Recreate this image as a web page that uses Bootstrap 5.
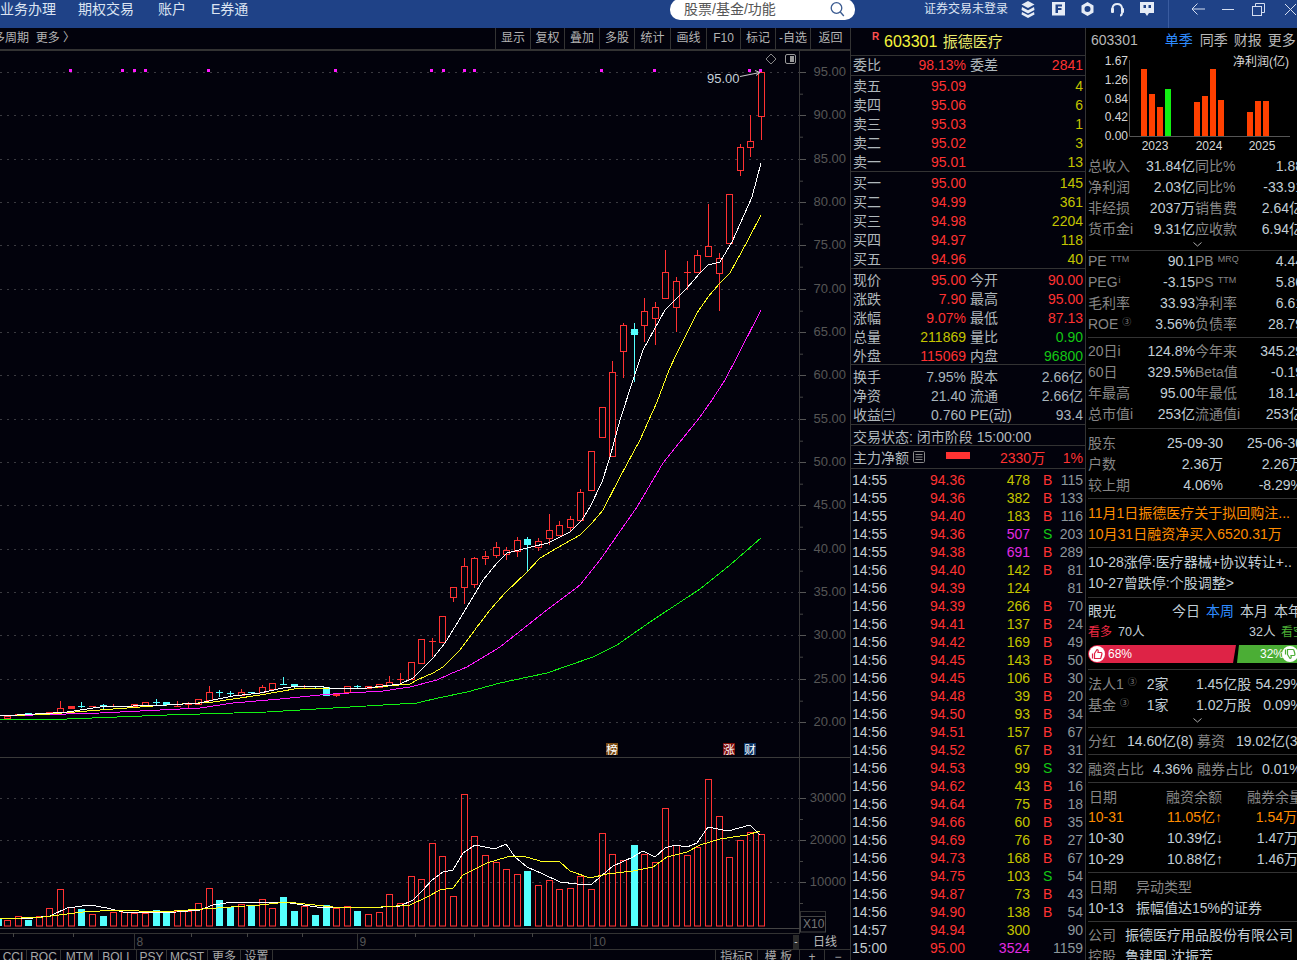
<!DOCTYPE html>
<html lang="zh"><head><meta charset="utf-8"><title>603301 振德医疗</title>
<link href="https://cdn.jsdelivr.net/npm/bootstrap@5.3.0/dist/css/bootstrap.min.css" rel="stylesheet">
<style>
html,body{margin:0;width:1297px;height:960px;overflow:hidden;background:#02020c;font-family:"Liberation Sans","Noto Sans CJK SC",sans-serif;font-size:14px;color:#b8c4cc}
svg{display:block}
svg text{font-family:"Liberation Sans","Noto Sans CJK SC",sans-serif}
.topbar{height:28px;background:#1f4287;color:#dce4f2;flex:none}
.topnav{line-height:19px;white-space:nowrap}
.searchbox{position:absolute;left:670px;top:-1px;width:185px;height:21px;background:#fff;border-radius:10px;color:#555;line-height:20px;padding-left:14px}
.mainarea{height:932px}
.chartcol{width:851px;border-right:1px solid #333;flex:none;overflow:hidden}
.toolbar{height:23px;border-bottom:2px solid #333;background:#02020c;font-size:12px;color:#b4b4b4;line-height:21px;white-space:nowrap}
.tbtn{border-left:1px solid #333;text-align:center;flex:none;height:21px}
.toolleft{overflow:hidden;margin-left:-8px;width:503px;flex:none;padding-left:1px}
.botbar{height:10px;font-size:12px;color:#a8a8a8;line-height:15px;overflow:hidden;white-space:nowrap}
.botcell{border-right:1px solid #333;text-align:center;flex:none;height:10px}
.quote{width:235px;border-right:1px solid #333;flex:none;overflow:hidden;background:#02020c}
.qsec{border-bottom:1px solid #333}
.qtitle{height:28px;position:relative;line-height:27px;color:#f5f53c;padding-left:33px;font-size:16px}
.qtitle b{position:absolute;left:21px;top:3px;font-size:10px;line-height:12px;color:#ff5050;font-weight:700}
.qtitle i{font-style:normal;font-size:15px;margin-left:1px;color:#e9e96a}
.qrow{height:19px;line-height:19px;padding:0 2px;display:flex;white-space:nowrap}
.lh1 .qrow{line-height:21px}
.lh2 .qrow{line-height:23px}
.qlb{width:30px;flex:none;color:#b0b8bc}
.qv{width:83px;flex:none;text-align:right;color:#ff3232}
.qlb2{margin-left:4px;flex:none;color:#b0b8bc}
.qe{margin-left:auto;text-align:right;color:#c4c400}
.tick{height:18px;line-height:22px;display:flex;padding:0 2px 0 1px;white-space:nowrap}
.tt{width:40px;flex:none;color:#c4ccd0}
.tp{width:73px;text-align:right;flex:none;color:#ff3232}
.tv{width:65px;text-align:right;flex:none;color:#c4c400}
.tf{width:8px;margin-left:13px;flex:none;color:#ff3232;text-align:center}
.tl{margin-left:auto;color:#8d979c}
.fin{width:211px;background:#000;overflow:hidden;flex:none}
.fhead{height:22px;line-height:24px;white-space:nowrap;padding-left:5px;color:#b8b8b8}
.fhead span{margin-left:6px}
.fsec{width:215px;margin-left:2px;border-bottom:1px solid #333;white-space:nowrap}
.fr{height:21px;line-height:21px;display:flex;position:relative}
.fa{width:107px;flex:none;display:flex;justify-content:space-between}
.fb{width:108px;flex:none;display:flex;justify-content:space-between}
.gl{color:#868686}
.vl{color:#c2ced6}
sup.tiny{font-size:9px;top:-.4em;color:#868686;margin-left:4px;line-height:0}
.chev{height:11px;width:218px;padding-top:2px}
.chev svg{margin:0 auto}
.news{color:#ff8c00}
.blu{color:#2f8cff}
.vote{height:18px;position:relative;margin-top:2px;font-size:12px;line-height:18px;color:#fff}
.vred{position:absolute;left:0;top:0;width:148px;height:18px;background:#de2346;clip-path:polygon(0 0,100% 0,98% 100%,0 100%);border-radius:9px 0 0 9px;padding-left:20px}
.vgrn{position:absolute;left:149px;top:0;width:66px;height:18px;background:#4bae35;clip-path:polygon(3% 0,100% 0,100% 100%,0 100%);padding-left:23px}
.vico{position:absolute;top:1px;width:16px;height:16px;border-radius:50%;background:#fff}
.cr{color:#ff3232}.cg{color:#14c814}.cy{color:#c4c400}.cw{color:#a9b6bd}.cm{color:#e22be2}
</style></head>
<body class="d-flex flex-column">
<header class="topbar d-flex position-relative">
 <div class="topnav d-flex"><span>业务办理</span><span style="margin-left:22px">期权交易</span><span style="margin-left:24px">账户</span><span style="margin-left:25px">E券通</span></div>
 <div class="searchbox">股票/基金/功能
  <svg class="position-absolute" style="right:9px;top:2px" width="17" height="17" viewBox="0 0 17 17" fill="none" stroke="#3a5a90" stroke-width="1.3"><circle cx="7.5" cy="7" r="5.3"/><path d="M11.3 11l3.5 4"/></svg>
 </div>
 <span class="position-absolute topnav" style="left:924px;top:0;font-size:12px">证券交易未登录</span>
 <svg class="position-absolute" style="left:1020px;top:0" width="277" height="28" viewBox="1020 0 277 28">
  <g fill="#e6ecf6"><path d="M1028 1l6.5 3.5-6.5 3.5-6.500-3.500z"/><path d="M1022 7l6 3.300 6-3.300 .5 3-6.500 3.500-6.500-3.500z"/><path d="M1022 12l6 3 6-3 .5 2.500-6.500 3.500-6.500-3.500z"/>
  <path fill-rule="evenodd" d="M1052 2h13v13.500h-13zM1055.500 4.500v8.500h2.500v-3h3.500v-2h-3.500v-1.500h4v-2z"/>
  <path fill-rule="evenodd" d="M1087.500 2l6 3.500v7l-6 3.500-6-3.500v-7zM1087.500 6a3 3 0 100 6 3 3 0 000-6z"/>
  <path fill-rule="evenodd" d="M1140 2h14v11h-5l-2 3-2-3h-5zM1143.500 5v3h2.500v-3zM1148.500 5v3h2.500v-3z"/></g>
  <path d="M1112.500 12V8a4.800 4.800 0 019.500 0v4M1120 15.500c1.500 0 2-1 2-3" fill="none" stroke="#e6ecf6" stroke-width="2"/>
  <rect x="1111" y="8" width="3" height="5" rx="1" fill="#e6ecf6"/><rect x="1121" y="8" width="3" height="5" rx="1" fill="#e6ecf6"/>
  <path d="M1168.500 0v28" stroke="#3a5ca0"/>
  <g fill="none" stroke="#d5def0" stroke-width="1"><path d="M1192 9h13M1197.500 3.500l-5.500 5.500 5.500 5.500"/><path d="M1222 9.500h12"/><rect x="1252.500" y="6.500" width="9" height="9"/><path d="M1255.500 6.500v-3h9v9h-3"/><path d="M1285 4l11 11M1296 4l-11 11"/></g>
 </svg>
</header>
<div class="d-flex mainarea">
 <section class="chartcol d-flex flex-column">
  <div class="toolbar d-flex">
   <div class="toolleft">多周期&nbsp;&nbsp;更多 〉</div>
   <div class="tbtn" style="width:35px">显示</div><div class="tbtn" style="width:34px">复权</div><div class="tbtn" style="width:35px">叠加</div><div class="tbtn" style="width:35px">多股</div><div class="tbtn" style="width:36px">统计</div><div class="tbtn" style="width:36px">画线</div><div class="tbtn" style="width:34px">F10</div><div class="tbtn" style="width:35px">标记</div><div class="tbtn" style="width:35px">-自选</div><div class="tbtn" style="width:40px">返回</div>
  </div>
  <svg id="kchart" width="850" height="899" viewBox="0 51 850 899"></svg>
  <div class="botbar d-flex">
   <div class="botcell" style="width:27px">CCI</div><div class="botcell" style="width:34px">ROC</div><div class="botcell" style="width:38px">MTM</div><div class="botcell" style="width:38px">BOLL</div><div class="botcell" style="width:30px">PSY</div><div class="botcell" style="width:41px">MCST</div><div class="botcell" style="width:33px">更多</div><div class="botcell" style="width:32px">设置</div>
   <div style="width:443px;flex:none" class="botcell"></div><div class="botcell" style="width:42px">指标R</div><div class="botcell" style="width:42px">模 板</div><div class="botcell" style="width:25px">+</div><div class="botcell" style="width:26px;border:0">−</div>
  </div>
 </section>

 <section class="quote">
  <div class="qsec qtitle"><b>R</b>603301 <i>振德医疗</i></div>
  <div class="qsec" style="height:20px"><div class="qrow"><span class="qlb">委比</span><span class="qv">98.13%</span><span class="qlb2">委差</span><span class="qe cr">2841</span></div></div>
  <div class="qsec lh1">
   <div class="qrow"><span class="qlb">卖五</span><span class="qv">95.09</span><span class="qe">4</span></div>
   <div class="qrow"><span class="qlb">卖四</span><span class="qv">95.06</span><span class="qe">6</span></div>
   <div class="qrow"><span class="qlb">卖三</span><span class="qv">95.03</span><span class="qe">1</span></div>
   <div class="qrow"><span class="qlb">卖二</span><span class="qv">95.02</span><span class="qe">3</span></div>
   <div class="qrow"><span class="qlb">卖一</span><span class="qv">95.01</span><span class="qe">13</span></div>
  </div>
  <div class="qsec lh2" style="padding-bottom:1px">
   <div class="qrow"><span class="qlb">买一</span><span class="qv">95.00</span><span class="qe">145</span></div>
   <div class="qrow"><span class="qlb">买二</span><span class="qv">94.99</span><span class="qe">361</span></div>
   <div class="qrow"><span class="qlb">买三</span><span class="qv">94.98</span><span class="qe">2204</span></div>
   <div class="qrow"><span class="qlb">买四</span><span class="qv">94.97</span><span class="qe">118</span></div>
   <div class="qrow"><span class="qlb">买五</span><span class="qv">94.96</span><span class="qe">40</span></div>
  </div>
  <div class="qsec lh2">
   <div class="qrow"><span class="qlb">现价</span><span class="qv">95.00</span><span class="qlb2">今开</span><span class="qe cr">90.00</span></div>
   <div class="qrow"><span class="qlb">涨跌</span><span class="qv">7.90</span><span class="qlb2">最高</span><span class="qe cr">95.00</span></div>
   <div class="qrow"><span class="qlb">涨幅</span><span class="qv">9.07%</span><span class="qlb2">最低</span><span class="qe cr">87.13</span></div>
   <div class="qrow"><span class="qlb">总量</span><span class="qv cy">211869</span><span class="qlb2">量比</span><span class="qe cg">0.90</span></div>
   <div class="qrow"><span class="qlb">外盘</span><span class="qv">115069</span><span class="qlb2">内盘</span><span class="qe cg">96800</span></div>
  </div>
  <div class="qsec lh2" style="height:60px;padding-top:1px">
   <div class="qrow"><span class="qlb">换手</span><span class="qv cw">7.95%</span><span class="qlb2">股本</span><span class="qe cw">2.66亿</span></div>
   <div class="qrow"><span class="qlb">净资</span><span class="qv cw">21.40</span><span class="qlb2">流通</span><span class="qe cw">2.66亿</span></div>
   <div class="qrow"><span class="qlb text-nowrap">收益㈢</span><span class="qv cw">0.760</span><span class="qlb2">PE(动)</span><span class="qe cw">93.4</span></div>
  </div>
  <div class="qsec" style="height:21px;line-height:24px;padding-left:2px;color:#b0b8bc">交易状态: 闭市阶段 15:00:00</div>
  <div class="qsec" style="height:23px">
   <div class="qrow position-relative" style="line-height:24px;height:22px"><span class="qlb text-nowrap">主力净额</span>
    <svg class="position-absolute" style="left:62px;top:5px" width="12" height="12" fill="none" stroke="#888"><rect x=".5" y=".5" width="11" height="11" rx="1"/><path d="M2.500 3.500h7M2.500 6h7M2.500 8.500h7"/></svg>
    <span class="position-absolute" style="left:95px;top:6px;width:24px;height:7px;background:#ff3232"></span>
    <span class="position-absolute cr" style="left:149px">2330万</span><span class="qe cr">1%</span></div>
  </div>
  <div id="ticks">
<div class="tick"><span class="tt">14:55</span><span class="tp">94.36</span><span class="tv">478</span><span class="tf">B</span><span class="tl">115</span></div>
<div class="tick"><span class="tt">14:55</span><span class="tp">94.36</span><span class="tv">382</span><span class="tf">B</span><span class="tl">133</span></div>
<div class="tick"><span class="tt">14:55</span><span class="tp">94.40</span><span class="tv">183</span><span class="tf">B</span><span class="tl">116</span></div>
<div class="tick"><span class="tt">14:55</span><span class="tp">94.36</span><span class="tv cm">507</span><span class="tf cg">S</span><span class="tl">203</span></div>
<div class="tick"><span class="tt">14:55</span><span class="tp">94.38</span><span class="tv cm">691</span><span class="tf">B</span><span class="tl">289</span></div>
<div class="tick"><span class="tt">14:56</span><span class="tp">94.40</span><span class="tv">142</span><span class="tf">B</span><span class="tl">81</span></div>
<div class="tick"><span class="tt">14:56</span><span class="tp">94.39</span><span class="tv">124</span><span class="tf"></span><span class="tl">81</span></div>
<div class="tick"><span class="tt">14:56</span><span class="tp">94.39</span><span class="tv">266</span><span class="tf">B</span><span class="tl">70</span></div>
<div class="tick"><span class="tt">14:56</span><span class="tp">94.41</span><span class="tv">137</span><span class="tf">B</span><span class="tl">24</span></div>
<div class="tick"><span class="tt">14:56</span><span class="tp">94.42</span><span class="tv">169</span><span class="tf">B</span><span class="tl">49</span></div>
<div class="tick"><span class="tt">14:56</span><span class="tp">94.45</span><span class="tv">143</span><span class="tf">B</span><span class="tl">50</span></div>
<div class="tick"><span class="tt">14:56</span><span class="tp">94.45</span><span class="tv">106</span><span class="tf">B</span><span class="tl">30</span></div>
<div class="tick"><span class="tt">14:56</span><span class="tp">94.48</span><span class="tv">39</span><span class="tf">B</span><span class="tl">20</span></div>
<div class="tick"><span class="tt">14:56</span><span class="tp">94.50</span><span class="tv">93</span><span class="tf">B</span><span class="tl">34</span></div>
<div class="tick"><span class="tt">14:56</span><span class="tp">94.51</span><span class="tv">157</span><span class="tf">B</span><span class="tl">67</span></div>
<div class="tick"><span class="tt">14:56</span><span class="tp">94.52</span><span class="tv">67</span><span class="tf">B</span><span class="tl">31</span></div>
<div class="tick"><span class="tt">14:56</span><span class="tp">94.53</span><span class="tv">99</span><span class="tf cg">S</span><span class="tl">32</span></div>
<div class="tick"><span class="tt">14:56</span><span class="tp">94.62</span><span class="tv">43</span><span class="tf">B</span><span class="tl">16</span></div>
<div class="tick"><span class="tt">14:56</span><span class="tp">94.64</span><span class="tv">75</span><span class="tf">B</span><span class="tl">18</span></div>
<div class="tick"><span class="tt">14:56</span><span class="tp">94.66</span><span class="tv">60</span><span class="tf">B</span><span class="tl">35</span></div>
<div class="tick"><span class="tt">14:56</span><span class="tp">94.69</span><span class="tv">76</span><span class="tf">B</span><span class="tl">27</span></div>
<div class="tick"><span class="tt">14:56</span><span class="tp">94.73</span><span class="tv">168</span><span class="tf">B</span><span class="tl">67</span></div>
<div class="tick"><span class="tt">14:56</span><span class="tp">94.75</span><span class="tv">103</span><span class="tf cg">S</span><span class="tl">54</span></div>
<div class="tick"><span class="tt">14:56</span><span class="tp">94.87</span><span class="tv">73</span><span class="tf">B</span><span class="tl">43</span></div>
<div class="tick"><span class="tt">14:56</span><span class="tp">94.90</span><span class="tv">138</span><span class="tf">B</span><span class="tl">54</span></div>
<div class="tick"><span class="tt">14:57</span><span class="tp">94.94</span><span class="tv">300</span><span class="tf"></span><span class="tl">90</span></div>
<div class="tick"><span class="tt">15:00</span><span class="tp">95.00</span><span class="tv cm">3524</span><span class="tf"></span><span class="tl">1159</span></div>
  </div>
 </section>

 <aside class="fin">
  <div class="fhead">603301<span class="blu" style="margin-left:27px">单季</span><span style="margin-left:7px">同季</span><span>财报</span><span>更多 〉</span></div>
  <svg width="211" height="106" viewBox="1086 50 211 106">
   <g font-size="12" fill="#d8d8d8" text-anchor="end"><text x="1128" y="65">1.67</text><text x="1128" y="84">1.26</text><text x="1128" y="103">0.84</text><text x="1128" y="121">0.42</text><text x="1128" y="140">0.00</text></g>
   <path d="M1129.500 60v76.500H1290" fill="none" stroke="#555"/>
   <g fill="#ff4000"><rect x="1141" y="69" width="6" height="67"/><rect x="1149" y="94" width="6" height="42"/><rect x="1157" y="107" width="6" height="29"/><rect x="1194" y="102" width="6" height="34"/><rect x="1202" y="96" width="6" height="40"/><rect x="1210" y="69" width="6" height="67"/><rect x="1218" y="100" width="6" height="36"/><rect x="1247" y="112" width="6" height="24"/><rect x="1255" y="101" width="6" height="35"/><rect x="1263" y="101" width="6" height="35"/></g>
   <rect x="1165" y="89" width="6" height="47" fill="#12f012"/>
   <text x="1233" y="66" font-size="12" fill="#d8d8d8">净利润(亿)</text>
   <g font-size="12" fill="#d8d8d8" text-anchor="middle"><text x="1155" y="150">2023</text><text x="1209" y="150">2024</text><text x="1262" y="150">2025</text></g>
  </svg>
  <div class="fsec">
   <div class="fr"><div class="fa"><span class="gl">总收入</span><span class="vl">31.84亿</span></div><div class="fb"><span class="gl">同比%</span><span class="vl">1.88</span></div></div>
   <div class="fr"><div class="fa"><span class="gl">净利润</span><span class="vl">2.03亿</span></div><div class="fb"><span class="gl">同比%</span><span class="vl">-33.91</span></div></div>
   <div class="fr"><div class="fa"><span class="gl">非经损</span><span class="vl">2037万</span></div><div class="fb"><span class="gl">销售费</span><span class="vl">2.64亿</span></div></div>
   <div class="fr"><div class="fa"><span class="gl">货币金i</span><span class="vl">9.31亿</span></div><div class="fb"><span class="gl">应收款</span><span class="vl">6.94亿</span></div></div>
   <div class="chev" style="height:10px"><svg width="9" height="5" viewBox="0 0 9 5" fill="none" stroke="#aaa"><path d="M.5.5l4 3.500 4-3.500"/></svg></div>
  </div>
  <div class="fsec" style="padding-bottom:2px">
   <div class="fr"><div class="fa"><span class="gl">PE<sup class="tiny">TTM</sup></span><span class="vl">90.1</span></div><div class="fb"><span class="gl">PB<sup class="tiny">MRQ</sup></span><span class="vl">4.44</span></div></div>
   <div class="fr"><div class="fa"><span class="gl">PEG<sup class="tiny" style="margin-left:1px">i</sup></span><span class="vl">-3.15</span></div><div class="fb"><span class="gl">PS<sup class="tiny">TTM</sup></span><span class="vl">5.86</span></div></div>
   <div class="fr"><div class="fa"><span class="gl">毛利率</span><span class="vl">33.93</span></div><div class="fb"><span class="gl">净利率</span><span class="vl">6.61</span></div></div>
   <div class="fr"><div class="fa"><span class="gl">ROE<sup class="tiny">③</sup></span><span class="vl">3.56%</span></div><div class="fb"><span class="gl">负债率</span><span class="vl">28.79</span></div></div>
  </div>
  <div class="fsec" style="padding:3px 0 3px">
   <div class="fr"><div class="fa"><span class="gl">20日i</span><span class="vl">124.8%</span></div><div class="fb"><span class="gl">今年来</span><span class="vl">345.29</span></div></div>
   <div class="fr"><div class="fa"><span class="gl">60日</span><span class="vl">329.5%</span></div><div class="fb"><span class="gl">Beta值</span><span class="vl">-0.19</span></div></div>
   <div class="fr"><div class="fa"><span class="gl">年最高</span><span class="vl">95.00</span></div><div class="fb"><span class="gl">年最低</span><span class="vl">18.14</span></div></div>
   <div class="fr"><div class="fa"><span class="gl">总市值i</span><span class="vl">253亿</span></div><div class="fb"><span class="gl">流通值i</span><span class="vl">253亿</span></div></div>
  </div>
  <div class="fsec" style="padding:4px 0 2px">
   <div class="fr"><span class="gl" style="width:60px">股东</span><span class="vl text-end" style="width:75px">25-09-30</span><span class="vl text-end" style="width:80px">25-06-30</span></div>
   <div class="fr"><span class="gl" style="width:60px">户数</span><span class="vl text-end" style="width:75px">2.36万</span><span class="vl text-end" style="width:80px">2.26万</span></div>
   <div class="fr"><span class="gl" style="width:60px">较上期</span><span class="vl text-end" style="width:75px">4.06%</span><span class="vl text-end" style="width:80px">-8.29%</span></div>
  </div>
  <div class="fsec news" style="padding:4px 0 2px">
   <div class="fr">11月1日振德医疗关于拟回购注...</div>
   <div class="fr">10月31日融资净买入6520.31万</div>
  </div>
  <div class="fsec vl" style="padding:4px 0 3px">
   <div class="fr">10-28涨停:医疗器械+协议转让+..</div>
   <div class="fr">10-27曾跌停:个股调整&gt;</div>
  </div>
  <div class="fsec" style="padding:3px 0 6px">
   <div class="fr"><span class="vl">眼光</span><span class="vl position-absolute" style="left:84px">今日</span><span class="blu position-absolute" style="left:118px">本周</span><span class="vl position-absolute" style="left:152px">本月</span><span class="vl position-absolute" style="left:186px">本年</span></div>
   <div class="fr" style="font-size:12.500px"><span style="color:#f02a44;font-size:12px">看多</span><span class="vl position-absolute" style="left:30px">70人</span><span class="vl position-absolute" style="left:161px">32人</span><span class="position-absolute" style="left:193px;color:#4bae35;font-size:12px">看空</span></div>
   <div class="vote"><div class="vred">68%</div><div class="vgrn">32%</div>
    <div class="vico" style="left:1px"><svg width="16" height="16" viewBox="0 0 16 16" fill="none" stroke="#de2346" stroke-width="1.200"><path d="M3.500 7.500v5M5.500 7.500l2.500-4c1 0 1.500 1 1 3h3c1 0 1 1 .8 2l-1 3.500c-.2.500-.5.500-1 .5H5.500z"/></svg></div>
    <div class="vico" style="left:194px"><svg width="16" height="16" viewBox="0 0 16 16" fill="none" stroke="#4bae35" stroke-width="1.200"><path d="M3.500 3.500v5M5.500 8.500l2.500 4c1 0 1.500-1 1-3h3c1 0 1-1 .8-2l-1-3.500c-.2-.5-.5-.5-1-.5H5.500z"/></svg></div>
   </div>
  </div>
  <div class="fsec" style="padding:4px 0 0">
   <div class="fr"><span class="gl" style="width:62px">法人1<sup class="tiny">③</sup></span><span class="vl" style="width:52px">2家</span><span class="vl" style="width:63px">1.45亿股</span><span class="vl">54.29%</span></div>
   <div class="fr"><span class="gl" style="width:62px">基金<sup class="tiny">③</sup></span><span class="vl" style="width:52px">1家</span><span class="vl" style="width:71px">1.02万股</span><span class="vl">0.09%</span></div>
   <div class="chev"><svg width="9" height="5" viewBox="0 0 9 5" fill="none" stroke="#aaa"><path d="M.5.5l4 3.500 4-3.500"/></svg></div>
  </div>
  <div class="fsec" style="padding:3px 0 2px">
   <div class="fr"><span class="gl" style="width:39px">分红</span><span class="vl" style="width:70px">14.60亿(8)</span><span class="gl" style="width:39px">募资</span><span class="vl">19.02亿(3)</span></div>
  </div>
  <div class="fsec" style="padding:4px 0 2px">
   <div class="fr"><span class="gl" style="width:65px">融资占比</span><span class="vl" style="width:44px">4.36%</span><span class="gl" style="width:65px">融券占比</span><span class="vl">0.01%</span></div>
  </div>
  <div class="fsec" style="padding:4px 0 2px">
   <div class="fr" style="height:20px;line-height:20px"><span class="gl" style="width:79px;padding-left:1px">日期</span><span class="gl" style="width:82px">融资余额</span><span class="gl">融券余量</span></div>
   <div class="fr news"><span style="width:79px">10-31</span><span>11.05亿↑</span><span class="text-end" style="width:75px">1.54万</span></div>
   <div class="fr vl"><span style="width:79px">10-30</span><span>10.39亿↓</span><span class="text-end" style="width:75px">1.47万</span></div>
   <div class="fr vl"><span style="width:79px">10-29</span><span>10.88亿↑</span><span class="text-end" style="width:75px">1.46万</span></div>
  </div>
  <div class="fsec" style="padding:4px 0 2px">
   <div class="fr"><span class="gl" style="width:48px;padding-left:1px">日期</span><span class="gl">异动类型</span></div>
   <div class="fr vl"><span style="width:48px">10-13</span><span>振幅值达15%的证券</span></div>
  </div>
  <div class="fsec border-0" style="padding:3px 0 0">
   <div class="fr"><span class="gl" style="width:37px">公司</span><span class="vl">振德医疗用品股份有限公司</span></div>
   <div class="fr"><span class="gl" style="width:37px">控股</span><span class="vl">鲁建国,沈振芳</span></div>
  </div>
 </aside>
</div>
<script src="https://cdn.jsdelivr.net/npm/bootstrap@5.3.0/dist/js/bootstrap.bundle.min.js"></script>
<script>
(function(){
var R='#ff3232',C='#54ffff',o=[];
function X(k){return Math.round(761-k*10.62)}
function L(a,b,c,d,s,e){o.push('<path d="M'+a+' '+b+'L'+c+' '+d+'" stroke="'+s+'" '+(e||'')+'/>')}
for(var p=0;p<16;p++){var y=Math.round(72+p*43.33)+.5;L(0,y,800,y,'#3a3a40','stroke-dasharray="2 5"');L(800,y,806,y,'#555');
 o.push('<text x="846" y="'+(y+3.5)+'" text-anchor="end" font-size="13" fill="#565656">'+(95-p*5).toFixed(2)+'</text>');
 if(p<15)L(800,y+21.7,803,y+21.7,'#444');}
[[797.5,30000],[840,20000],[882,10000]].forEach(function(v){var y=Math.round(v[0])+.5;L(0,y,800,y,'#3a3a40','stroke-dasharray="2 5"');L(800,y,806,y,'#555');L(800,y+21,803,y+21,'#444');
 o.push('<text x="846" y="'+(y+3.5)+'" text-anchor="end" font-size="13" fill="#565656">'+v[1]+'</text>');});
L(799.5,51,799.5,933,'#3a3a3a');L(0,757.5,850,757.5,'#3a3a3a');L(0,928.5,800,928.5,'#444');L(0,933.5,800,933.5,'#333');L(0,949.5,850,949.5,'#333');
[13,73,191,247,302,415,474,532].forEach(function(x){L(x+.5,933,x+.5,937,'#444')});
[[134.5,'8'],[357.5,'9'],[590.5,'10']].forEach(function(a){L(a[0],933,a[0],949,'#333');o.push('<text x="'+(a[0]+2)+'" y="946" font-size="12" fill="#555">'+a[1]+'</text>')});
var K=[[72,115.5,0,140],[141,147,115,157],[147,170,144,176],[194,243,0,0],[258,273,253,311],[246,256,204,0],[255,272,250,0],[272,272,261,290],[281,307,277,332],[272,298,250,0],[307,318,302,345],[311,325,298,342],[329,334,323,382,1],[325,351,323,378],[372,456,361,0],[407,437,0,0],[451,490,0,0],[492,520,489,0],[519,527,516,532],[525,535,521,0],[530,538,514,545],[541,547,538,551],[539,544,537,572,1],[540,551,537,557],[550,554,547,560],[547,555,542,558],[556,558,551,565],[558,584,557,588],[566,587,558,604],[587,597,0,602],[616,642,0,0],[641,641,638,657],[639,663,0,0],[662,679,0,0],[679,679,673,685],[682,685,676,0],[684,687,0,0],[686,688,0,0],[686,686,685,689,1],[686,692,0,0],[693,695,693,697,2],[687,695,0,0,1],[686,686,0,688,1],[686,686,685,689],[684,686,0,688,1],[684,684,677,685,1],[683,689,0,0],[687,692,685,0],[692,692,0,0,1],[692,695,689,0],[693,693,691,697,1],[692,692,690,697,1],[692,700,686,0],[699,704,0,0],[704,704,702,708],[706,706,701,0],[702,704,0,0,1],[702,702,699,705,1],[702,706,0,0],[704,706,0,0],[706,706,0,0],[706,706,704,0],[705,705,704,709,1],[706,706,0,0],[706,706,702,708,1],[706,708,0,709,2],[708,712,701,0],[712,714,0,0,2],[714,714,0,0],[713,714,0,0,1],[714,715,0,0],[716,718,0,0]];
K.forEach(function(c,k){var x=X(k),col=c[4]==1?C:R,t=Math.round(c[0]),b=Math.round(c[1]);
 if(c[2])L(x+.5,c[2],x+.5,t,col);
 if(c[3])L(x+.5,b,x+.5,c[3],col);
 if(t==b)L(x-3,t+.5,x+4,t+.5,col);
 else if(c[4]){o.push('<rect x="'+(x-3)+'" y="'+t+'" width="7" height="'+(b-t+1)+'" fill="'+col+'"/>')}
 else o.push('<rect x="'+(x-2.5)+'" y="'+(t+.5)+'" width="6" height="'+(b-t)+'" fill="#02020c" stroke="'+R+'"/>');
});
function poly(pts,col,w){o.push('<polyline fill="none" shape-rendering="crispEdges" stroke="'+col+'" stroke-width="'+(w||1)+'" points="'+pts+'"/>')}
var M5='761,163 752,197 732,242 720,262 708,265 700,273 687,288 665,310 643,350 634,377 620,420 610,457 602,482 590,507 582,520 570,532 548,543 527,548 507,553 497,563 483,580 467,607 453,630 445,643 433,658 413,678 400,684 367,688 333,689 320,686 300,686 283,688 260,693 233,696 213,700 200,703 167,705 100,707 67,712 53,713 0,716';
var M10='761,215 748,240 730,273 720,283 708,297 697,313 677,353 669,370 657,402 640,440 620,477 603,510 592,523 580,535 557,548 540,558 527,572 505,593 490,610 477,627 460,650 443,667 433,673 417,680 410,684 367,688 333,689 300,688 260,695 213,702 167,705 100,710 50,714 0,716';
var M20='761,310 737,357 725,380 712,400 700,417 663,463 637,507 600,560 580,585 543,613 500,647 467,667 450,674 437,680 410,687 383,691 333,694 320,695 280,699 233,703 200,708 160,710 100,713 0,716';
var M60='761,538 730,565 700,589 650,622 617,645 593,657 547,673 500,683 467,692 438,698 417,703 333,708 267,712 167,715 67,719 0,719';
poly(M60,'#12f012');poly(M20,'#ff18ff');poly(M10,'#ffff20');poly(M5,'#ffffff');
[70,122,134,145,208,335,431,443,464,474,601,654,749,760].forEach(function(x){o.push('<rect x="'+(x-1)+'" y="69" width="3" height="3" fill="#ff18ff"/>')});
o.push('<text x="707" y="83" font-size="13" fill="#c4d0d8">95.00</text>');
o.push('<path d="M740 76.500L760 72.500M755 70.500l5 2-4 3" fill="none" stroke="#c8c8c8"/>');
o.push('<path d="M771 54l5 5-5 5-5-5z" fill="none" stroke="#888"/><rect x="785.500" y="54.500" width="10" height="9" rx="1.500" fill="none" stroke="#999"/><rect x="790" y="56" width="4" height="6" fill="#999"/>');
[[606,'#7a4a12','榜'],[723,'#7d0c0c','涨'],[744,'#0c3768','财']].forEach(function(a){o.push('<rect x="'+a[0]+'" y="743" width="12" height="12" fill="'+a[1]+'"/><text x="'+(a[0]+6)+'" y="753.500" text-anchor="middle" font-size="11.500" fill="#fff">'+a[2]+'</text>')});
var V=[834,832,840,857,816,779,847,855,845,808,862,854,-845,860,854,833,889,876,888,889,880,885,-871,874,869,862,855,836,794,896,856,843,879,876,903,894,912,914,-911,906,908,-905,-915,906,-911,-897,908,899,-906,904,-907,-900,888,903,911,911,-913,-910,913,913,912,912,-916,914,-909,907,889,908,916,-920,916,920];
V.forEach(function(v,k){var x=X(k),y=Math.abs(v);
 if(v<0)o.push('<rect x="'+(x-3)+'" y="'+y+'" width="7" height="'+(926-y)+'" fill="'+C+'"/>');
 else o.push('<rect x="'+(x-2.5)+'" y="'+(y+.5)+'" width="6" height="'+(926-y-.5)+'" fill="none" stroke="'+R+'"/>');
});
o.push('<rect x="0" y="918" width="2" height="8" fill="'+C+'"/>');
poly('760,835 750,825 728,831 708,827 697,843 687,847 675,845 665,848 655,857 643,851 633,857 613,866 592,884 577,884 560,882 543,874 527,867 515,857 506,844 495,849 475,845 463,853 453,870 443,872 432,880 423,890 413,900 400,906 367,908 333,907 317,907 283,902 260,903 233,902 213,905 200,910 177,912 143,913 123,912 107,908 90,905 67,908 50,916 33,918 0,919','#ffffff');
poly('760,831 747,835 720,839 700,845 687,852 667,857 653,867 633,871 607,874 590,878 570,871 560,862 540,861 523,856 507,857 487,863 463,875 453,888 440,890 427,897 410,905 367,908 333,907 287,902 260,905 217,908 160,912 117,910 83,912 43,917 0,919','#ffff20');
o.push('<rect x="800.500" y="911.500" width="25" height="14" fill="none" stroke="#333"/><rect x="800.500" y="916.500" width="25" height="15.500" fill="#02020c" stroke="#444"/><text x="803" y="928" font-size="12" fill="#777">X10</text>');
o.push('<rect x="793" y="935" width="6" height="14" fill="#2a2a2a"/><text x="796" y="945" text-anchor="middle" font-size="10" fill="#ccc">-</text>');
o.push('<text x="825" y="946" text-anchor="middle" font-size="12" fill="#bbb">日线</text>');
document.getElementById('kchart').innerHTML=o.join('');
})();
</script>
</body></html>
